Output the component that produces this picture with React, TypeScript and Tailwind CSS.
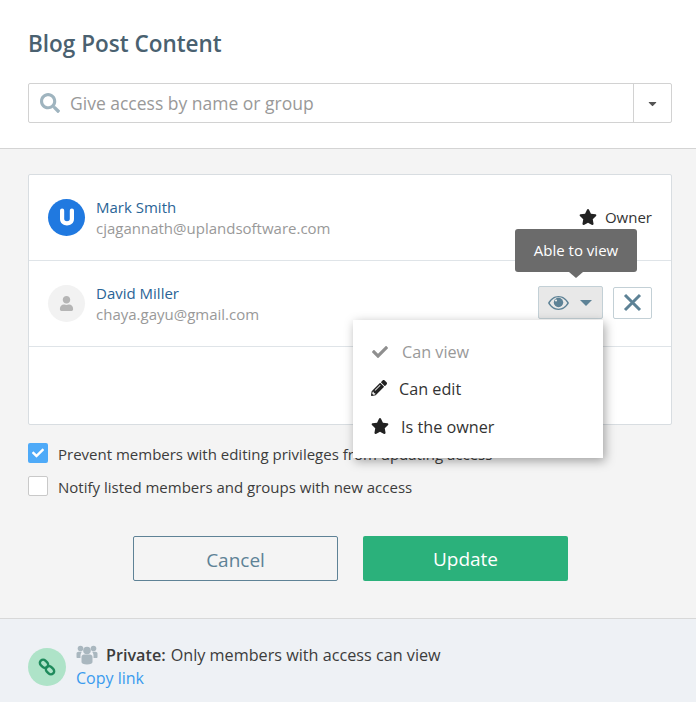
import { FaSearch, FaStar, FaCheck, FaPencilAlt, FaUser, FaCaretDown } from "react-icons/fa";

export default function App() {
  return (
    <div className="relative w-[696px] h-[702px] overflow-hidden bg-[#f4f4f4] font-['Open_Sans',sans-serif]">
      {/* Header */}
      <div className="h-[149px] bg-white border-b border-[#d4d4d4] pl-[28px] pr-[24px] pt-[28px]">
        <h1 className="text-[22.5px] leading-[32px] font-semibold text-[#4a6170]">Blog Post Content</h1>
        <div className="mt-[23px] flex h-[40px] rounded-[2px] border border-[#d2d2d2] bg-white">
          <div className="flex flex-1 items-center pl-[11px]">
            <FaSearch className="text-[20px] text-[#9fb4bf]" />
            <span className="ml-[10px] text-[17.5px] text-[#999999]">Give access by name or group</span>
          </div>
          <div className="flex w-[38px] items-center justify-center border-l border-[#d2d2d2]">
            <FaCaretDown className="text-[13px] text-[#555555]" />
          </div>
        </div>
      </div>

      {/* Members */}
      <div className="ml-[28px] mr-[24px] mt-[25px] h-[251px] rounded-[2px] border border-[#d8dde1] bg-white">
        <div className="flex h-[86px] items-center border-b border-[#dfe4e8] pl-[19px] pr-[19px]">
          <div className="flex h-[37px] w-[37px] items-center justify-center rounded-full bg-[#2079e0]">
            <svg width="16" height="20" viewBox="0 0 16 20">
              <path d="M1 2.5a2 2 0 0 1 4.2 0V11c0 3 5.6 3 5.6 0V2.5a2 2 0 0 1 4.2 0V11c0 8.5-14 8.5-14 0z" fill="#ffffff" />
            </svg>
          </div>
          <div className="ml-[11px] flex-1">
            <div className="text-[15px] leading-[21px] text-[#2a6496]">Mark Smith</div>
            <div className="text-[15px] leading-[21px] text-[#999999]">cjagannath@uplandsoftware.com</div>
          </div>
          <div className="mt-[-1px] flex items-center text-[15px] text-[#333333]">
            <FaStar className="text-[18px] text-[#222222]" />
            <span className="ml-[8px]">Owner</span>
          </div>
        </div>
        <div className="flex h-[86px] items-center border-b border-[#dfe4e8] pl-[19px] pr-[19px]">
          <div className="flex h-[37px] w-[37px] items-center justify-center rounded-full bg-[#f2f2f2]">
            <FaUser className="text-[15px] text-[#b5b5b5]" />
          </div>
          <div className="ml-[11px] flex-1">
            <div className="text-[15px] leading-[21px] text-[#2a6496]">David Miller</div>
            <div className="text-[15px] leading-[21px] text-[#999999]">chaya.gayu@gmail.com</div>
          </div>
          <div className="mt-[-2px] flex h-[33px] w-[65px] items-center justify-center gap-[11px] rounded-[2px] border border-[#c3d0d6] bg-[#e8e8e8] pr-[1px] text-[#5d8296]">
            <svg width="21" height="14" viewBox="0 0 21 14" fill="currentColor">
              <path fillRule="evenodd" d="M10.5 0C15 0 18.8 2.8 21 7c-2.2 4.2-6 7-10.5 7S2.2 11.2 0 7C2.200 2.800 6 0 10.500 0zM10.500 1.300C7 1.300 3.800 3.300 1.700 7c2.100 3.700 5.300 5.700 8.800 5.700s6.700-2 8.800-5.700c-2.100-3.700-5.300-5.700-8.800-5.700z" />
              <circle cx="10.500" cy="6.500" r="4.700" />
              <circle cx="8" cy="4.500" r="1.100" fill="#e8e8e8" />
            </svg>
            <span className="h-0 w-0 border-x-[6px] border-t-[6px] border-x-transparent border-t-[#5d8296]" />
          </div>
          <div className="ml-[10px] mt-[-2px] flex h-[32px] w-[39px] items-center justify-center rounded-[2px] border border-[#c3d0d6] bg-white text-[#5d8296]">
            <svg width="19" height="19" viewBox="0 0 19 19" stroke="currentColor" strokeWidth="3" fill="none">
              <path d="M2 2l15 15M17 2L2 17" />
            </svg>
          </div>
        </div>
      </div>

      {/* Options */}
      <div className="ml-[28px] mr-[24px] mt-[18px] flex flex-col gap-[12px] text-[15px] leading-[20px] text-[#3c3c3c]">
        <label className="flex items-start">
          <span className="flex h-[20px] w-[20px] items-center justify-center rounded-[2px] bg-[#4eaaf8]">
            <FaCheck className="text-[12px] text-white" />
          </span>
          <span className="ml-[10px] whitespace-nowrap pt-[1px]">Prevent members with editing privileges from updating access</span>
        </label>
        <label className="flex items-start">
          <span className="h-[20px] w-[20px] rounded-[2px] border border-[#c9c9c9] bg-white" />
          <span className="ml-[10px] pt-[1px]">Notify listed members and groups with new access</span>
        </label>
      </div>

      {/* Actions */}
      <div className="mt-[39px] flex gap-[25px] pl-[133px]">
        <button className="h-[45px] w-[205px] rounded-[2px] border border-[#5e8296] pt-[3px] text-[19px] text-[#5e8296]">Cancel</button>
        <button className="h-[45px] w-[205px] rounded-[2px] bg-[#2bb17b] pt-[1px] text-[19px] font-medium text-white">Update</button>
      </div>

      {/* Footer */}
      <div className="absolute inset-x-0 bottom-0 flex h-[84px] items-start border-t border-[#d8d8d8] bg-[#eef1f5] pl-[28px] pt-[24px]">
        <div className="mt-[5px] flex h-[38px] w-[38px] items-center justify-center rounded-full bg-[#aee3c8]">
          <svg width="20" height="20" viewBox="0 0 20 20" fill="none" stroke="#1f8a5c" strokeWidth="2.400">
            <rect x="2.500" y="3.500" width="9" height="6.500" rx="3.200" transform="rotate(45 7 6.750)" />
            <rect x="8.500" y="10" width="9" height="6.500" rx="3.200" transform="rotate(45 13 13.250)" />
          </svg>
        </div>
        <div className="ml-[10px]">
          <div className="flex items-center text-[16.2px] leading-[24px] text-[#3c3c3c]">
            <svg width="22" height="20" viewBox="0 0 22 20" fill="#a9b7bf" className="mt-[-1px]">
              <circle cx="4.500" cy="3.500" r="2.800" />
              <circle cx="17.500" cy="3.500" r="2.800" />
              <path d="M0.500 8.500c0-1 1-1.800 2-1.800h3.500c-1 1-1.500 2.300-1.500 3.800v2.500H1.500c-.6 0-1-.4-1-1zM21.500 8.500c0-1-1-1.800-2-1.800H16c1 1 1.500 2.300 1.500 3.800v2.500h3c.6 0 1-.4 1-1z" />
              <circle cx="11" cy="5.500" r="3.800" />
              <path d="M5.500 12c0-1.500 1.200-2.500 2.500-2.500h6c1.300 0 2.500 1 2.500 2.500v5c0 1.500-2 2.500-5.500 2.500S5.500 18.500 5.500 17z" />
            </svg>
            <span className="ml-[8px] font-semibold">Private:</span>
            <span className="ml-[5px]">Only members with access can view</span>
          </div>
          <div className="text-[16px] leading-[22px] text-[#3a9bee]">Copy link</div>
        </div>
      </div>

      {/* Tooltip */}
      <div className="absolute left-[515px] top-[229px] flex h-[43px] w-[122px] items-center justify-center rounded-[3px] bg-[#6b6b6b] text-[15px] text-white">
        Able to view
        <span className="absolute bottom-[-6px] left-[54px] h-0 w-0 border-x-[7px] border-t-[6px] border-x-transparent border-t-[#6b6b6b]" />
      </div>

      {/* Dropdown */}
      <div className="absolute left-[353px] top-[320px] h-[138px] w-[250px] bg-white text-[16.2px] text-[#333333] shadow-[2px_3px_10px_rgba(0,0,0,0.35)]">
        <div className="flex h-[64px] items-center pl-[19px] text-[#999999]">
          <FaCheck className="text-[16px] text-[#8f8f8f]" />
          <span className="ml-[14px]">Can view</span>
        </div>
        <div className="mt-[-13px] flex h-[37px] items-center pl-[18px]">
          <FaPencilAlt className="mt-[-3px] text-[16px] text-[#222222]" />
          <span className="ml-[12px]">Can edit</span>
        </div>
        <div className="flex h-[38px] items-center pl-[18px] pt-[1px]">
          <FaStar className="mt-[-4px] text-[18px] text-[#222222]" />
          <span className="ml-[12px]">Is the owner</span>
        </div>
      </div>
    </div>
  );
}
